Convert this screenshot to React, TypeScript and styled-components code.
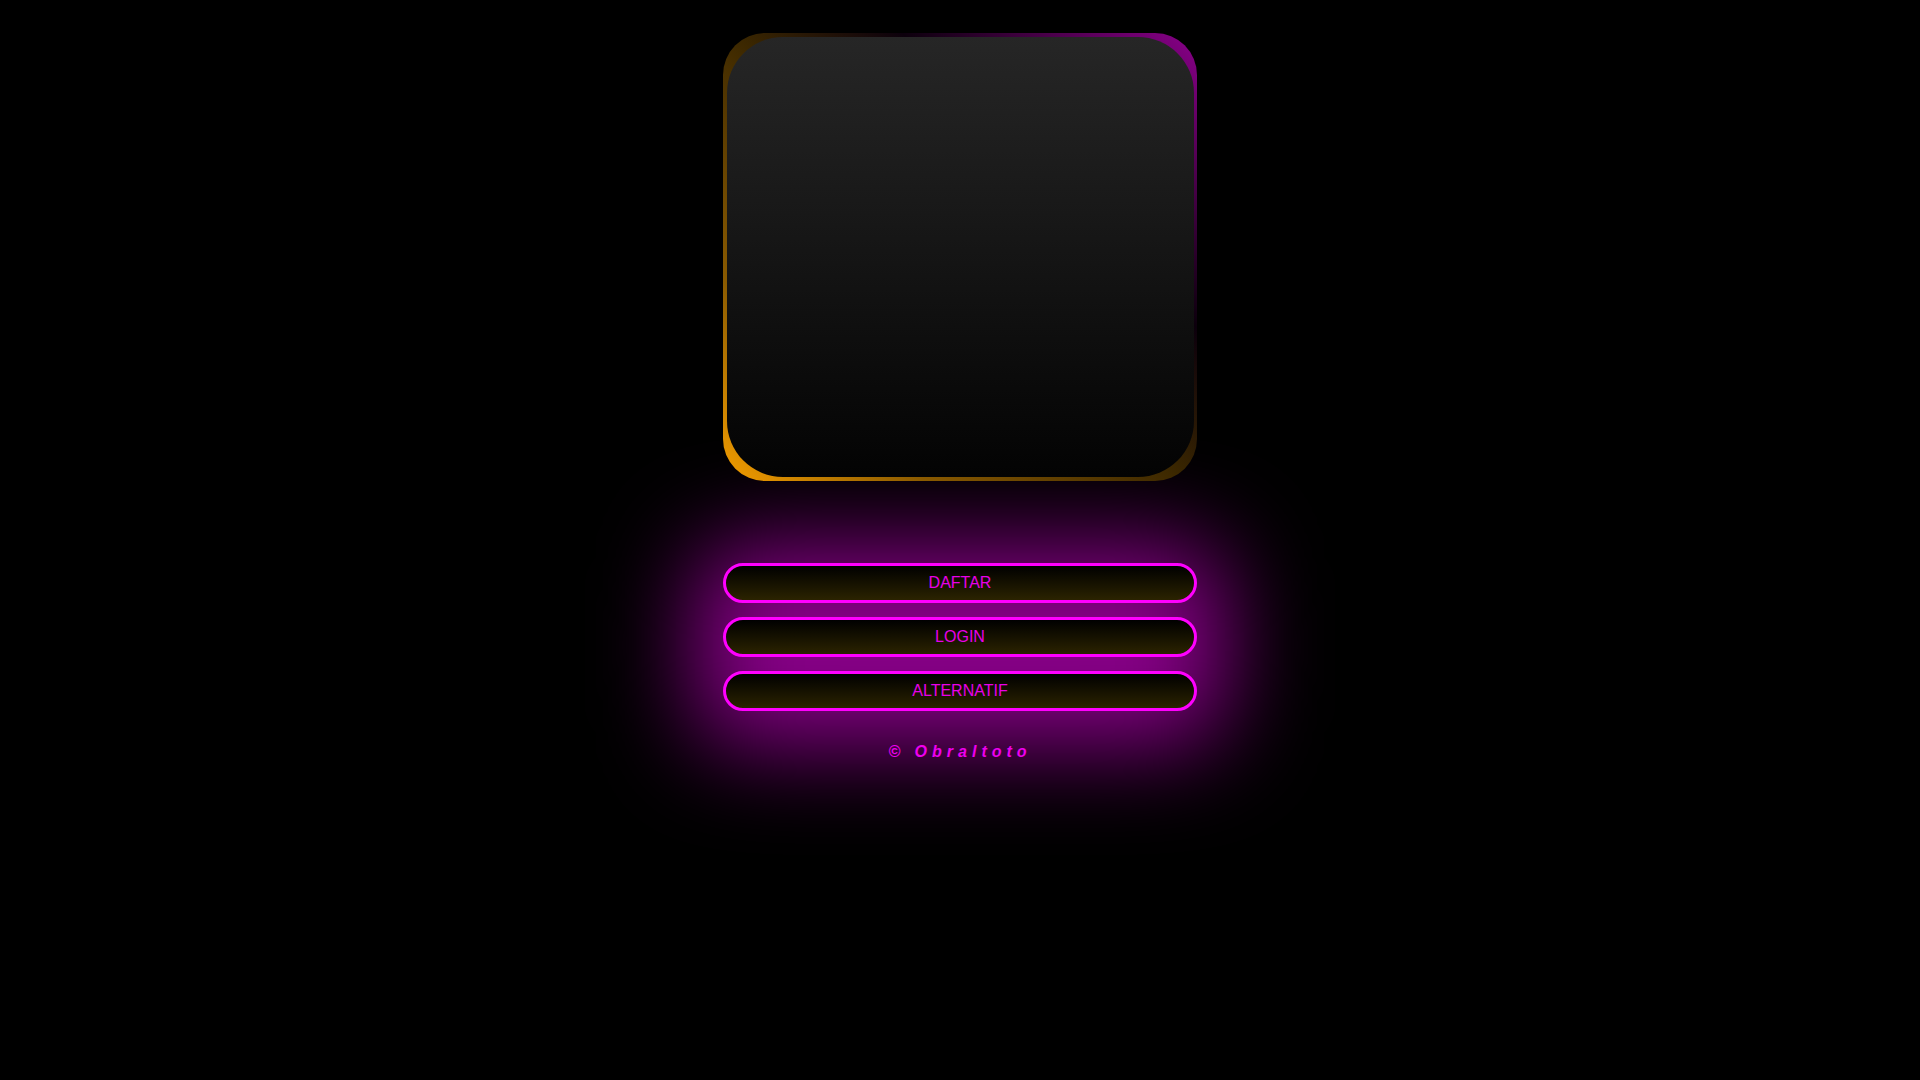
import React from "react";
import styled, { createGlobalStyle } from "styled-components";

const GlobalStyle = createGlobalStyle`
  html, body {
    margin: 0;
    padding: 0;
    background: #000;
  }
  body {
    font-family: "Liberation Sans", Arial, sans-serif;
  }
`;

const Page = styled.main`
  min-height: 100vh;
  box-sizing: border-box;
  padding-top: 33px;
  display: flex;
  flex-direction: column;
  align-items: center;
  background: #000;
  overflow: hidden;
`;

const CardFrame = styled.div`
  width: 474px;
  height: 448px;
  box-sizing: border-box;
  padding: 4px 3px 4px 4px;
  border-radius: 42px;
  background: linear-gradient(
    45deg,
    #f59e00 0%,
    #8a5a00 22%,
    #3b2700 50%,
    #0c000c 68%,
    #8a008a 100%
  );
  position: relative;
  z-index: 2;
`;

const CardInner = styled.div`
  width: 100%;
  height: 100%;
  border-radius: 56px;
  background: linear-gradient(180deg, #262626 0%, #181818 40%, #030303 100%);
`;

const Menu = styled.nav`
  position: relative;
  z-index: 1;
  width: 474px;
  margin-top: 64px;
  padding: 18px 0 14px;
  display: flex;
  flex-direction: column;
  align-items: stretch;
  gap: 14px;

  /* soft neon glow behind the buttons */
  &::before {
    content: "";
    position: absolute;
    top: 0;
    left: -28px;
    right: -28px;
    height: 200px;
    border-radius: 40px;
    background: #880088;
    filter: blur(48px);
    z-index: -1;
  }
`;

const MenuButton = styled.a`
  height: 40px;
  box-sizing: border-box;
  display: flex;
  align-items: center;
  justify-content: center;
  border: 3px solid #ff00ff;
  border-radius: 20px;
  background: linear-gradient(180deg, #000 0%, #2b2300 100%);
  color: #e800e8;
  font-size: 16px;
  text-transform: uppercase;
  text-decoration: none;
  cursor: pointer;
`;

const Footer = styled.p`
  margin: 18px 0 0;
  text-align: center;
  color: #ee00ee;
  font-size: 16px;
  font-weight: bold;
  font-style: italic;
  letter-spacing: 5px;
`;

const links = ["Daftar", "Login", "Alternatif"];

export default function App() {
  return (
    <>
      <GlobalStyle />
      <Page>
        <CardFrame>
          <CardInner />
        </CardFrame>
        <Menu>
          {links.map((label) => (
            <MenuButton key={label} href="#">
              {label}
            </MenuButton>
          ))}
          <Footer>© Obraltoto</Footer>
        </Menu>
      </Page>
    </>
  );
}
